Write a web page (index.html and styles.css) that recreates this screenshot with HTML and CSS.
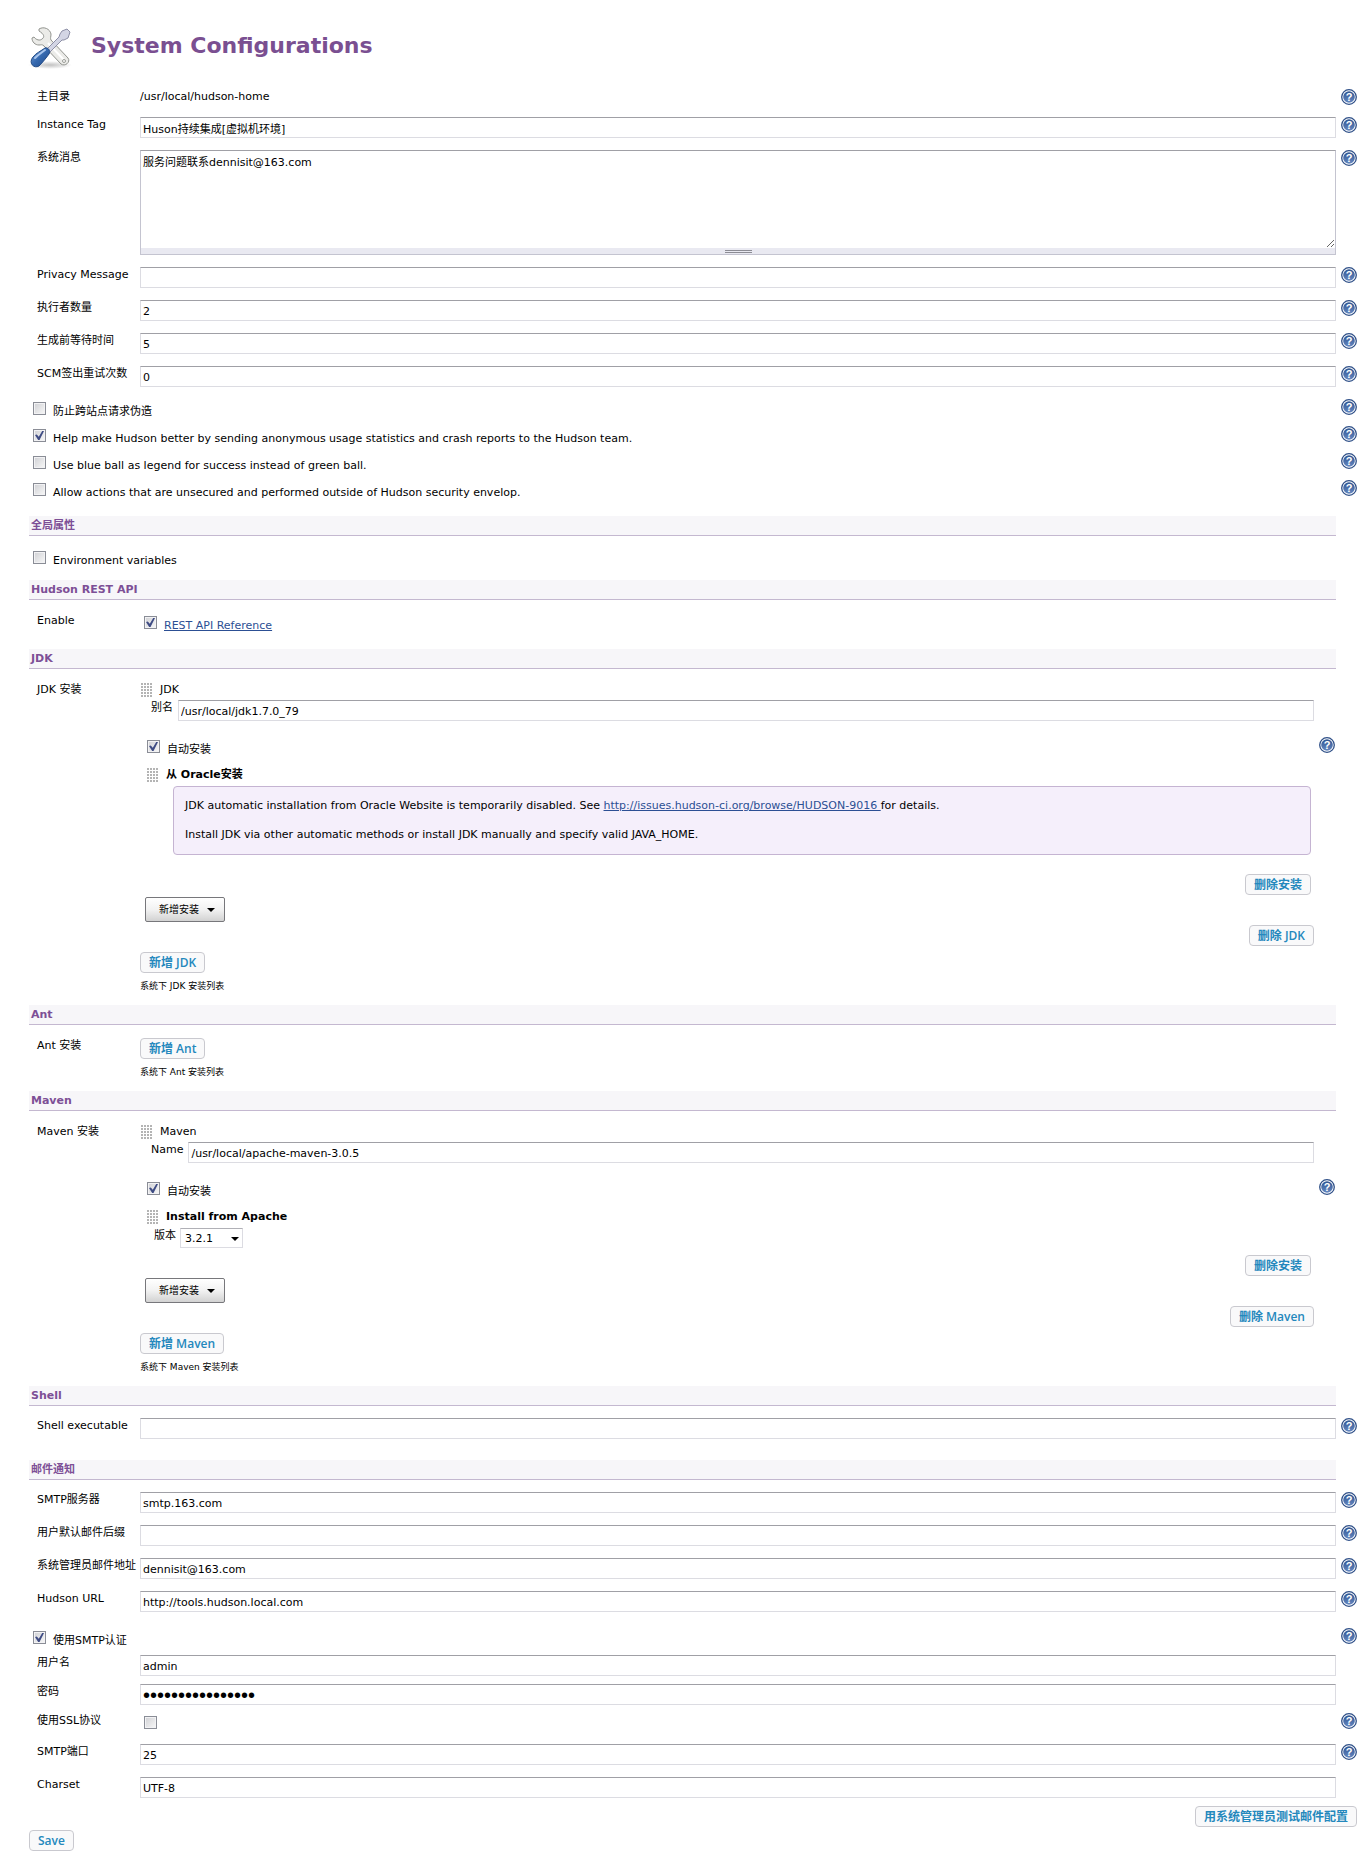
FILE: index.html
```html
<!DOCTYPE html>
<html lang="zh-CN">
<head>
    <meta charset="UTF-8">
    <title>System Configurations</title>
    <link rel="stylesheet" href="styles.css">
</head>
<body>
<svg width="0" height="0" class="defs">
    <defs>
        <linearGradient id="ball" x1="0" y1="0" x2="0" y2="1">
            <stop offset="0" stop-color="#2f5592"/>
            <stop offset="1" stop-color="#6688c0"/>
        </linearGradient>
        <symbol id="help" viewBox="0 0 16 16">
            <circle cx="8" cy="8" r="7.3" fill="#fff" stroke="#2f5088" stroke-width="1.3"/>
            <circle cx="8" cy="8" r="5.8" fill="url(#ball)"/>
            <text x="8" y="12" text-anchor="middle" font-family="Liberation Sans, sans-serif" font-size="11" font-weight="bold" fill="#fff">?</text>
        </symbol>
    </defs>
</svg>

<header class="title">
    <svg width="48" height="48" viewBox="0 0 48 48">
        <defs>
            <linearGradient id="handle" x1="0" y1="0" x2="1" y2="1">
                <stop offset="0" stop-color="#7ba6dc"/>
                <stop offset="0.5" stop-color="#3568ae"/>
                <stop offset="1" stop-color="#1f4a8a"/>
            </linearGradient>
            <radialGradient id="shade">
                <stop offset="0" stop-color="#999" stop-opacity="0.6"/>
                <stop offset="1" stop-color="#999" stop-opacity="0"/>
            </radialGradient>
        </defs>
        <ellipse cx="23" cy="41" rx="22" ry="4" fill="url(#shade)"/>
        <path d="M12 5c5-3 11 0 12 5 0 3-1 4 0 6l17 18c3 4-3 9-7 6L17 22c-2-2-3-1-5-1-4 0-7-3-7-7l2-1c2 3 6 4 8 2 3-2 2-5-3-8z" fill="#ebebe8" stroke="#92948f" stroke-width="1" stroke-linejoin="round"/>
        <path d="M21 19l16 17" stroke="#fff" stroke-width="2"/>
        <circle cx="37" cy="37" r="1.5" fill="#fff" stroke="#9a9c97"/>
        <path d="M35 7l5-2 3 3-2 6-4 2-2 0-13 13-3-3 13-13 1-3z" fill="#d3d5e4" stroke="#8d8fa6" stroke-width="1" stroke-linejoin="round"/>
        <path d="M6 33c3-4 8-6 12-9 3-1 6 3 4 6-3 4-6 8-10 12-5 3-11-3-6-9z" fill="url(#handle)" stroke="#214a86" stroke-width="1"/>
        <path d="M8 34c3-3 6-5 10-8" fill="none" stroke="#a9c6ee" stroke-width="2" stroke-linecap="round"/>
    </svg>
    <h1>System Configurations</h1>
</header>

<form class="config">
    <div class="row">
        <span class="name">主目录</span>
        <span class="value">/usr/local/hudson-home</span>
        <a class="help" href="#" aria-label="Help"><svg><use href="#help"/></svg></a>
    </div>
    <div class="row">
        <label class="name" for="tag">Instance Tag</label>
        <input class="text" type="text" id="tag" value="Huson持续集成[虚拟机环境]">
        <a class="help" href="#" aria-label="Help"><svg><use href="#help"/></svg></a>
    </div>
    <div class="row">
        <label class="name" for="message">系统消息</label>
        <div class="area">
            <textarea id="message">服务问题联系dennisit@163.com</textarea>
            <div class="area-handle"></div>
        </div>
        <a class="help" href="#" aria-label="Help"><svg><use href="#help"/></svg></a>
    </div>
    <div class="row">
        <label class="name" for="privacy">Privacy Message</label>
        <input class="text" type="text" id="privacy">
        <a class="help" href="#" aria-label="Help"><svg><use href="#help"/></svg></a>
    </div>
    <div class="row">
        <label class="name" for="executors">执行者数量</label>
        <input class="text" type="text" id="executors" value="2">
        <a class="help" href="#" aria-label="Help"><svg><use href="#help"/></svg></a>
    </div>
    <div class="row">
        <label class="name" for="quiet">生成前等待时间</label>
        <input class="text" type="text" id="quiet" value="5">
        <a class="help" href="#" aria-label="Help"><svg><use href="#help"/></svg></a>
    </div>
    <div class="row">
        <label class="name" for="retry">SCM签出重试次数</label>
        <input class="text" type="text" id="retry" value="0">
        <a class="help" href="#" aria-label="Help"><svg><use href="#help"/></svg></a>
    </div>
    <div class="check">
        <input type="checkbox" id="csrf">
        <label for="csrf">防止跨站点请求伪造</label>
        <a class="help" href="#" aria-label="Help"><svg><use href="#help"/></svg></a>
    </div>
    <div class="check">
        <input type="checkbox" id="stats" checked>
        <label for="stats">Help make Hudson better by sending anonymous usage statistics and crash reports to the Hudson team.</label>
        <a class="help" href="#" aria-label="Help"><svg><use href="#help"/></svg></a>
    </div>
    <div class="check">
        <input type="checkbox" id="blue">
        <label for="blue">Use blue ball as legend for success instead of green ball.</label>
        <a class="help" href="#" aria-label="Help"><svg><use href="#help"/></svg></a>
    </div>
    <div class="check">
        <input type="checkbox" id="unsecured">
        <label for="unsecured">Allow actions that are unsecured and performed outside of Hudson security envelop.</label>
        <a class="help" href="#" aria-label="Help"><svg><use href="#help"/></svg></a>
    </div>

    <h2>全局属性</h2>
    <div class="check last">
        <input type="checkbox" id="env">
        <label for="env">Environment variables</label>
    </div>

    <h2>Hudson REST API</h2>
    <div class="row tight">
        <label class="name" for="rest">Enable</label>
        <div class="check inline">
            <input type="checkbox" id="rest" checked>
            <a class="link" href="#">REST API Reference</a>
        </div>
    </div>

    <h2>JDK</h2>
    <div class="row tight">
        <span class="name">JDK 安装</span>
        <div class="tools">
            <div class="tool-head"><i class="grip"></i><span>JDK</span></div>
            <div class="tool-field">
                <label for="jdkName">别名</label>
                <input class="text" type="text" id="jdkName" value="/usr/local/jdk1.7.0_79">
            </div>
            <div class="check auto">
                <input type="checkbox" id="jdkAuto" checked>
                <label for="jdkAuto">自动安装</label>
                <a class="help" href="#" aria-label="Help"><svg><use href="#help"/></svg></a>
            </div>
            <div class="installer">
                <div class="tool-head"><i class="grip"></i><b>从 Oracle安装</b></div>
                <div class="notice">
                    <p>JDK automatic installation from Oracle Website is temporarily disabled. See <a class="link" href="#">http://issues.hudson-ci.org/browse/HUDSON-9016 </a>for details.</p>
                    <p>Install JDK via other automatic methods or install JDK manually and specify valid JAVA_HOME.</p>
                </div>
                <div class="right"><button type="button" class="btn">删除安装</button></div>
            </div>
            <button type="button" class="menu-btn">新增安装</button>
            <div class="right"><button type="button" class="btn">删除 JDK</button></div>
            <button type="button" class="btn add">新增 JDK</button>
            <p class="desc">系统下 JDK 安装列表</p>
        </div>
    </div>

    <h2>Ant</h2>
    <div class="row tight">
        <span class="name">Ant 安装</span>
        <div class="tools">
            <button type="button" class="btn">新增 Ant</button>
            <p class="desc">系统下 Ant 安装列表</p>
        </div>
    </div>

    <h2>Maven</h2>
    <div class="row tight">
        <span class="name">Maven 安装</span>
        <div class="tools">
            <div class="tool-head"><i class="grip"></i><span>Maven</span></div>
            <div class="tool-field">
                <label for="mavenName">Name</label>
                <input class="text" type="text" id="mavenName" value="/usr/local/apache-maven-3.0.5">
            </div>
            <div class="check auto">
                <input type="checkbox" id="mavenAuto" checked>
                <label for="mavenAuto">自动安装</label>
                <a class="help" href="#" aria-label="Help"><svg><use href="#help"/></svg></a>
            </div>
            <div class="installer">
                <div class="tool-head"><i class="grip"></i><b>Install from Apache</b></div>
                <div class="version">
                    <label for="version">版本</label>
                    <div class="select"><select id="version"><option>3.2.1</option></select></div>
                </div>
                <div class="right"><button type="button" class="btn">删除安装</button></div>
            </div>
            <button type="button" class="menu-btn">新增安装</button>
            <div class="right"><button type="button" class="btn">删除 Maven</button></div>
            <button type="button" class="btn add">新增 Maven</button>
            <p class="desc">系统下 Maven 安装列表</p>
        </div>
    </div>

    <h2>Shell</h2>
    <div class="row">
        <label class="name" for="shell">Shell executable</label>
        <input class="text" type="text" id="shell">
        <a class="help" href="#" aria-label="Help"><svg><use href="#help"/></svg></a>
    </div>

    <h2>邮件通知</h2>
    <div class="row">
        <label class="name" for="smtp">SMTP服务器</label>
        <input class="text" type="text" id="smtp" value="smtp.163.com">
        <a class="help" href="#" aria-label="Help"><svg><use href="#help"/></svg></a>
    </div>
    <div class="row">
        <label class="name" for="suffix">用户默认邮件后缀</label>
        <input class="text" type="text" id="suffix">
        <a class="help" href="#" aria-label="Help"><svg><use href="#help"/></svg></a>
    </div>
    <div class="row">
        <label class="name" for="admin">系统管理员邮件地址</label>
        <input class="text" type="text" id="admin" value="dennisit@163.com">
        <a class="help" href="#" aria-label="Help"><svg><use href="#help"/></svg></a>
    </div>
    <div class="row">
        <label class="name" for="url">Hudson URL</label>
        <input class="text" type="text" id="url" value="http://tools.hudson.local.com">
        <a class="help" href="#" aria-label="Help"><svg><use href="#help"/></svg></a>
    </div>
    <div class="check smtp-auth">
        <input type="checkbox" id="auth" checked>
        <label for="auth">使用SMTP认证</label>
        <a class="help" href="#" aria-label="Help"><svg><use href="#help"/></svg></a>
    </div>
    <div class="row close">
        <label class="name" for="user">用户名</label>
        <input class="text" type="text" id="user" value="admin">
    </div>
    <div class="row close">
        <label class="name" for="password">密码</label>
        <input class="text" type="password" id="password" value="hudsonhudson1234">
    </div>
    <div class="row ssl">
        <label class="name" for="ssl">使用SSL协议</label>
        <div class="check inline"><input type="checkbox" id="ssl"></div>
        <a class="help" href="#" aria-label="Help"><svg><use href="#help"/></svg></a>
    </div>
    <div class="row">
        <label class="name" for="port">SMTP端口</label>
        <input class="text" type="text" id="port" value="25">
        <a class="help" href="#" aria-label="Help"><svg><use href="#help"/></svg></a>
    </div>
    <div class="row close">
        <label class="name" for="charset">Charset</label>
        <input class="text" type="text" id="charset" value="UTF-8">
    </div>
    <div class="right"><button type="button" class="btn">用系统管理员测试邮件配置</button></div>
    <button type="submit" class="btn save">Save</button>
</form>
</body>
</html>
```

FILE: styles.css
```css
body {
    margin: 0;
    padding: 24px 13px 11px 29px;
    background: #fff;
    color: #000;
    font: 11px/16px "DejaVu Sans", "Noto Sans CJK SC", sans-serif;
}
input, textarea, select, button {
    box-sizing: border-box;
    margin: 0;
    font: inherit;
    color: inherit;
}
.defs {
    position: absolute;
}
.title {
    display: flex;
    align-items: center;
    height: 48px;
    margin-bottom: 17px;
}
.title svg {
    margin: 0 16px 0 -2px;
}
h1 {
    margin: 0;
    padding-bottom: 4px;
    font-size: 22px;
    line-height: 28px;
    color: #7a4f91;
}
h2 {
    margin: 9px 21px 12px 0;
    padding: 2px 2px 1px;
    border-bottom: 1px solid #c4b8d0;
    background: #f7f6f9;
    font-size: 11px;
    line-height: 16px;
    color: #7d4f96;
}
.config {
    display: flex;
    flex-direction: column;
}

/* rows */
.row {
    display: flex;
    align-items: flex-start;
    margin-bottom: 12px;
    padding-left: 8px;
}
.row.tight {
    margin-bottom: 0;
    padding-top: 1px;
}
.row.close {
    margin-bottom: 8px;
    margin-right: 21px;
}
.row.ssl {
    margin-bottom: 4px;
}
.name {
    flex: none;
    width: 103px;
    white-space: nowrap;
}
.value, .text, .area {
    flex: 1;
    min-width: 0;
}
.text {
    height: 21px;
    padding: 1px 2px 0;
    border: 1px solid #dcdce2;
    border-top-color: #a0a0a6;
    background: #fff;
}
.text[type="password"] {
    font: 20px/16px "Liberation Sans", sans-serif;
}
.help {
    flex: none;
    width: 16px;
    height: 16px;
    margin-left: 5px;
}
.help svg {
    display: block;
    width: 16px;
    height: 16px;
}
.link {
    color: #2c4f94;
}
.area {
    height: 105px;
}
.area textarea {
    display: block;
    width: 100%;
    height: 98px;
    padding: 4px 2px;
    border: 1px solid #c4c4d0;
    border-top-color: #a0a0a6;
    border-bottom: 0;
    outline: 0;
    resize: vertical;
}
.area-handle {
    display: flex;
    justify-content: center;
    align-items: center;
    height: 6px;
    border: 1px solid #c4c4d0;
    border-top: 0;
    background: #e9e9f1;
}
.area-handle::before {
    content: "";
    width: 27px;
    height: 1px;
    border: solid #8c8c94;
    border-width: 1px 0;
}

/* checkboxes */
.check {
    display: flex;
    align-items: flex-start;
    height: 27px;
    padding-left: 4px;
}
.check label, .check .link {
    margin-left: 7px;
    line-height: 26px;
}
.check .help {
    margin-left: auto;
}
.check.inline {
    flex: 1;
}
.check.last {
    height: 23px;
}
.check.smtp-auth {
    margin-top: 4px;
}
input[type="checkbox"] {
    appearance: none;
    flex: none;
    width: 13px;
    height: 13px;
    margin-top: 3px;
    border: 1px solid #8a8d96;
    background: linear-gradient(135deg, #cfd0d4, #f8f8f8);
    box-shadow: inset 0 0 0 1px #f2f2f4;
}
input[type="checkbox"]:checked::before {
    content: "";
    display: block;
    width: 9px;
    height: 9px;
    margin: 1px;
    background: #3f4c84;
    clip-path: polygon(0 45%, 20% 38%, 42% 65%, 80% 0, 100% 0, 50% 100%, 35% 100%);
}

/* tool installations */
.tools {
    flex: 1;
    min-width: 0;
    padding-right: 43px;
}
.tool-head {
    display: flex;
    align-items: center;
    gap: 8px;
    padding-left: 1px;
}
.grip {
    width: 11px;
    height: 14px;
    background: radial-gradient(circle at 1px 1px, #b4b4b4 0, #b4b4b4 50%, transparent 50%) 0 0 / 3px 3px;
}
.tool-field {
    display: flex;
    gap: 5px;
    margin-top: 2px;
    padding-left: 11px;
}
.check.auto {
    margin: 16px -21px 3px 0;
    padding-left: 7px;
}
.installer {
    margin-right: 3px;
    padding-left: 6px;
}
.notice {
    box-sizing: border-box;
    margin: 3px 0 19px 27px;
    padding: 11px;
    border: 1px solid #c5b4d2;
    border-radius: 4px;
    background: #f5effb;
}
.notice p {
    margin: 0;
}
.notice p + p {
    margin-top: 13px;
}
.version {
    display: flex;
    gap: 4px;
    margin: 3px 0 7px;
    padding-left: 8px;
}
.select {
    position: relative;
}
.select::after {
    content: "";
    position: absolute;
    top: 9px;
    right: 4px;
    border: solid transparent;
    border-width: 4px 4px 0;
    border-top-color: #000;
    pointer-events: none;
}
select {
    appearance: none;
    display: block;
    width: 63px;
    height: 20px;
    padding: 1px 4px 0;
    border: 1px solid #dcdce2;
    border-top-color: #b0b0b6;
    background: #fff;
}
.right {
    display: flex;
    justify-content: flex-end;
}
.btn {
    display: block;
    height: 21px;
    padding: 0 8px;
    border: 1px solid #c9c9cf;
    border-radius: 4px;
    background: #f9f9fa;
    font: 600 12px/19px "Open Sans", "Noto Sans CJK SC", sans-serif;
    color: #2488bd;
}
.btn.add {
    margin-top: 6px;
}
.btn.save {
    align-self: flex-start;
    margin-top: 3px;
}
.menu-btn {
    display: flex;
    align-items: center;
    gap: 8px;
    height: 25px;
    margin: 2px 0 3px 5px;
    padding: 0 9px 0 13px;
    border: 1px solid #77777b;
    border-radius: 2px;
    background: linear-gradient(#fff, #f2f2f2 50%, #d2d2d2);
    font-size: 10px;
}
.menu-btn::after {
    content: "";
    border: solid transparent;
    border-width: 4px 4px 0;
    border-top-color: #000;
}
.desc {
    margin: 5px 0 2px;
    font-size: 9px;
}
```
